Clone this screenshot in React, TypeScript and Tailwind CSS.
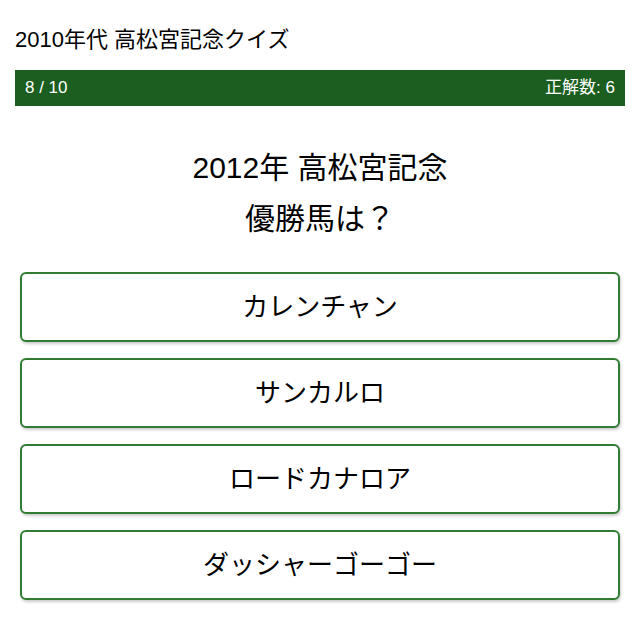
import React from 'react';

const choices = ['カレンチャン', 'サンカルロ', 'ロードカナロア', 'ダッシャーゴーゴー'];

export default function App() {
  return (
    <div className="w-[640px] h-[640px] bg-white px-[15px] pt-[25px] font-['Liberation_Sans','Noto_Sans_CJK_JP',sans-serif] text-black">
      <div className="text-[22px] leading-[30px]">2010年代 高松宮記念クイズ</div>
      <div className="mt-[15px] h-[36px] bg-[#1b5e20] text-white text-[17px] flex items-center justify-between px-[10px]">
        <span>8 / 10</span>
        <span>正解数: 6</span>
      </div>
      <div className="mt-[36px] text-center text-[30px] leading-[51px]">
        <div>2012年 高松宮記念</div>
        <div>優勝馬は？</div>
      </div>
      <div className="mt-[28px] flex flex-col gap-[16px] px-[5px]">
        {choices.map((c) => (
          <button
            key={c}
            className="h-[70px] w-full rounded-[6px] border-2 border-[#2e7d32] bg-white text-[26px] shadow-[1px_2px_3px_rgba(0,0,0,0.2)]"
          >
            {c}
          </button>
        ))}
      </div>
    </div>
  );
}
